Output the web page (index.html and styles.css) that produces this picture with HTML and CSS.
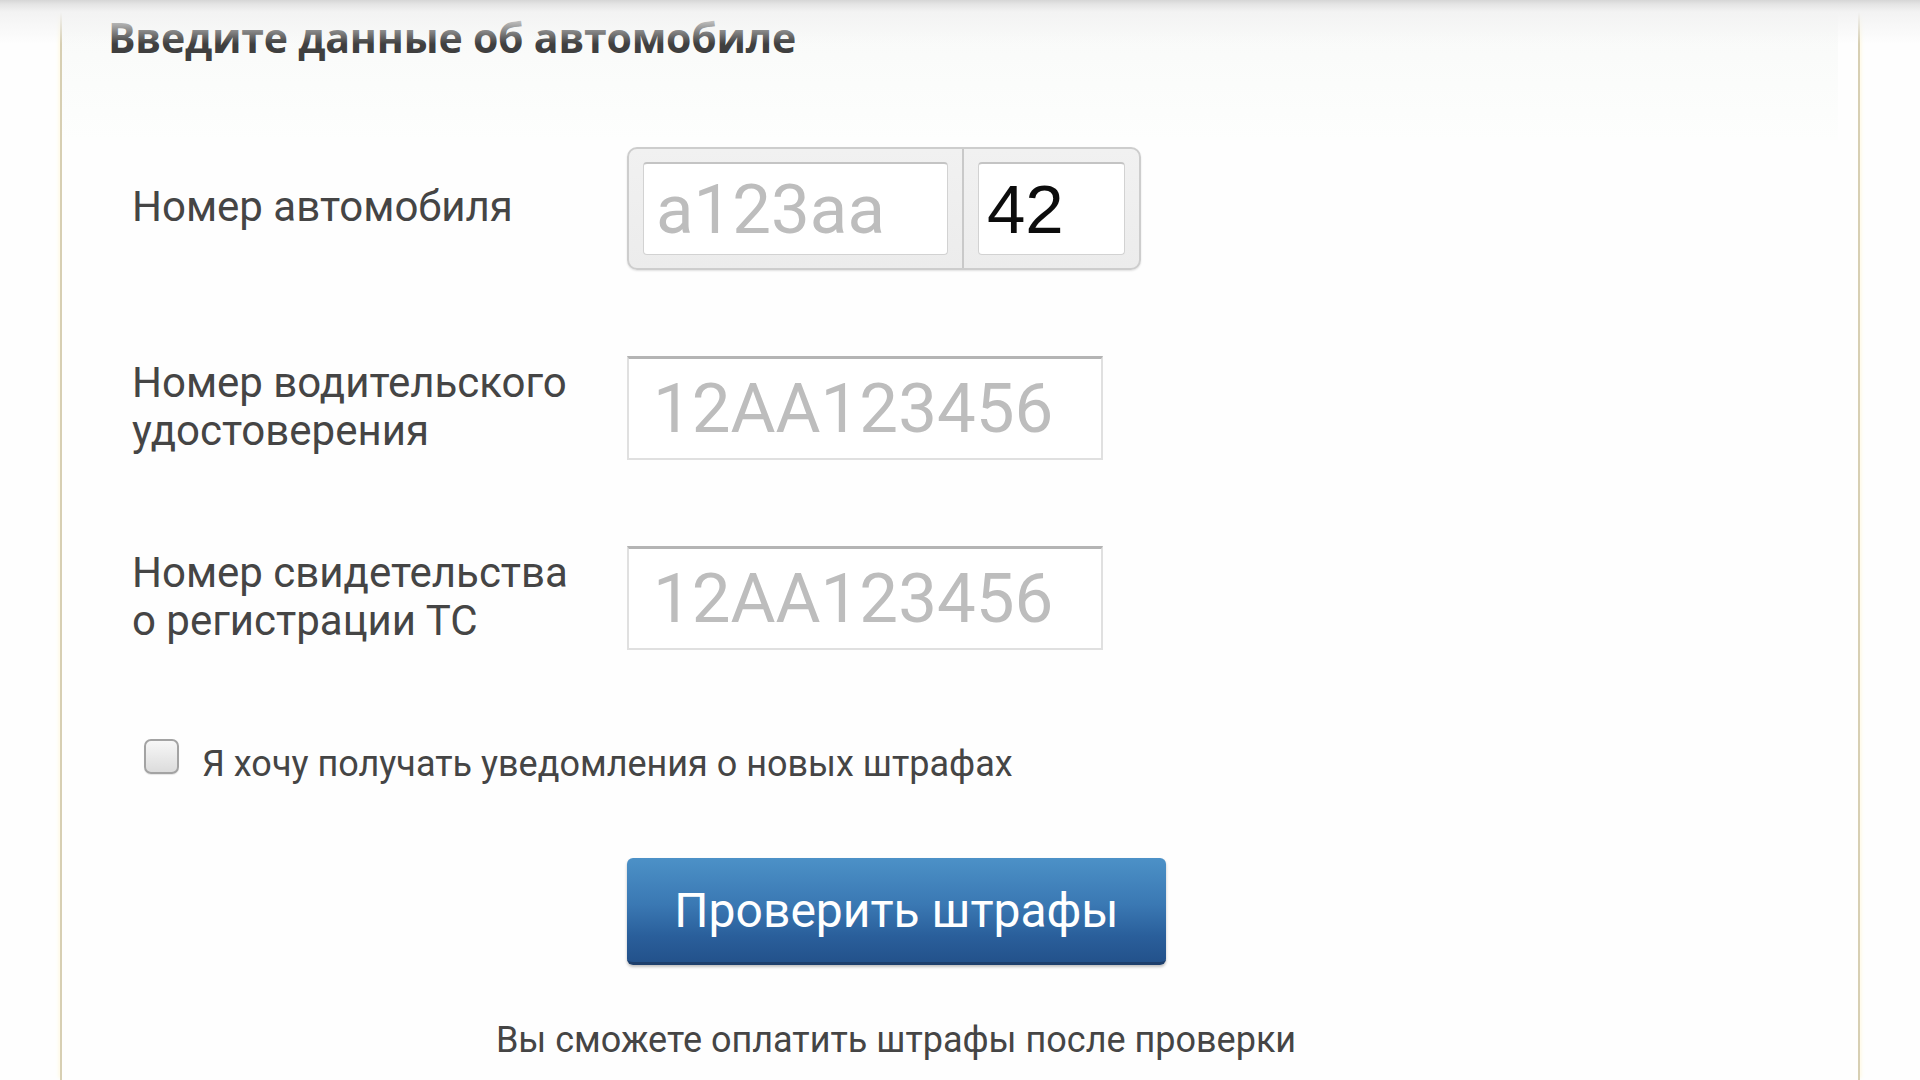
FILE: index.html
```html
<!DOCTYPE html>
<html lang="ru">
<head>
<meta charset="utf-8">
<title>Проверка штрафов</title>
<link rel="stylesheet" href="styles.css">
</head>
<body>
<div class="topbar"></div>
<div class="frame">
  <div class="head-panel">
    <h1 class="title">Введите данные об автомобиле</h1>
  </div>
  <form class="form">
    <div class="row row-plate">
      <label class="label">Номер автомобиля</label>
      <div class="plate">
        <div class="plate-cell plate-cell-main">
          <input class="plate-input" type="text" placeholder="a123aa">
        </div>
        <div class="plate-cell plate-cell-region">
          <input class="plate-input plate-region" type="text" value="42">
        </div>
      </div>
    </div>
    <div class="row">
      <label class="label">Номер водительского<br>удостоверения</label>
      <input class="text-input" type="text" placeholder="12AA123456">
    </div>
    <div class="row">
      <label class="label">Номер свидетельства<br>о регистрации ТС</label>
      <input class="text-input" type="text" placeholder="12AA123456">
    </div>
    <div class="check-row">
      <span class="checkbox"></span>
      <span class="check-label">Я хочу получать уведомления о новых штрафах</span>
    </div>
    <div class="row row-button">
      <span></span>
      <button class="btn" type="button">Проверить штрафы</button>
    </div>
    <p class="note">Вы сможете оплатить штрафы после проверки</p>
  </form>
</div>
</body>
</html>
```

FILE: styles.css
```css
html, body {
  margin: 0;
  padding: 0;
  background: #fefefe;
  height: 1080px;
  overflow: hidden;
}

.topbar {
  position: absolute;
  left: 0;
  top: 0;
  width: 1920px;
  height: 44px;
  background: linear-gradient(#d6d6d6 0, #e4e4e4 4px, #f3f3f3 12px, rgba(252,252,252,0) 44px);
  pointer-events: none;
}

.frame {
  margin-left: 60px;
  width: 1796px;
  height: 1080px;
  border-left: 2px solid #d7cfb3;
  border-right: 2px solid #d7cfb3;
  box-shadow: -3px 0 4px -2px #fff8df, 3px 0 4px -2px #fff8df;
  background: #fefefe;
}

.head-panel {
  height: 128px;
  padding: 12px 0 0 46px;
  margin-right: 20px;
  background: linear-gradient(#f8f9f8, #fbfcfb 60%, #fdfefd);
}

.title {
  margin: 0;
  font-family: "Open Sans", "Liberation Sans", sans-serif;
  font-weight: 700;
  font-size: 41px;
  line-height: 50px;
  color: #3f3f3f;
  letter-spacing: -0.2px;
}

.form {
  margin-top: 7px;
  padding-left: 70px;
  position: relative;
}

.row {
  display: grid;
  grid-template-columns: 495px auto;
  align-items: center;
  justify-content: start;
}

.row + .row {
  margin-top: 86px;
}

.label {
  font-family: Roboto, "Noto Sans", sans-serif;
  font-size: 42px;
  line-height: 48px;
  color: #454545;
  margin-top: -3px;
}

.plate {
  display: flex;
  width: 510px;
  height: 119px;
  border: 2px solid #cdcdcd;
  border-radius: 10px;
  background: linear-gradient(#f1f1f1, #ececec);
  box-shadow: 0 1px 2px rgba(0,0,0,0.12);
}

.plate-cell {
  display: flex;
  align-items: center;
  padding: 0 14px;
}

.plate-cell-main {
  width: 305px;
  border-right: 2px solid #c9c9c9;
}

.plate-cell-region {
  flex: 1;
}

.plate-input {
  box-sizing: border-box;
  width: 100%;
  height: 93px;
  border: 1px solid #d2d2d2;
  border-top: 2px solid #c4c4c4;
  border-radius: 4px;
  background: #fff;
  padding: 0 0 0 12px;
  font-family: Roboto, "Noto Sans", sans-serif;
  font-size: 69px;
  color: #111;
  outline: none;
}

.plate-input::placeholder {
  color: #bdbdbd;
}

.plate-region {
  font-family: "Liberation Sans", Arial, sans-serif;
  font-size: 69px;
  padding-left: 8px;
  color: #0c0c0c;
}

.text-input {
  box-sizing: border-box;
  width: 476px;
  height: 104px;
  border: 2px solid #e0e0e0;
  border-top: 3px solid #b4b4b4;
  background: #fff;
  padding: 0 0 0 24px;
  font-family: Roboto, "Noto Sans", sans-serif;
  font-size: 69px;
  color: #111;
  outline: none;
}

.text-input::placeholder {
  color: #bdbdbd;
}

.check-row {
  display: flex;
  align-items: center;
  margin-top: 88px;
  padding-left: 12px;
  height: 36px;
}

.checkbox {
  box-sizing: border-box;
  width: 35px;
  height: 35px;
  border: 2px solid #a3a3a3;
  border-radius: 7px;
  background: linear-gradient(#f7f7f7, #dcdcdc);
  box-shadow: 0 1px 1px rgba(0,0,0,0.1);
  flex: none;
}

.check-label {
  margin-left: 23px;
  padding-top: 15px;
  font-family: Roboto, "Noto Sans", sans-serif;
  font-size: 36px;
  color: #454545;
}

.row.row-button {
  margin-top: 84px;
}

.btn {
  width: 539px;
  height: 107px;
  border: none;
  border-bottom: 3px solid #1d3f6c;
  border-radius: 6px;
  background: linear-gradient(#4c91c7 0%, #3a78b3 45%, #2a5f9b 75%, #23528b 100%);
  box-shadow: 0 2px 3px rgba(0,0,0,0.25);
  color: #fff;
  font-family: Roboto, "Noto Sans", sans-serif;
  font-size: 48px;
  padding: 0;
}

.note {
  width: 1528px;
  margin: 51px 0 0;
  text-align: center;
  font-family: Roboto, "Noto Sans", sans-serif;
  font-size: 36px;
  line-height: 48px;
  color: #454545;
}
```
